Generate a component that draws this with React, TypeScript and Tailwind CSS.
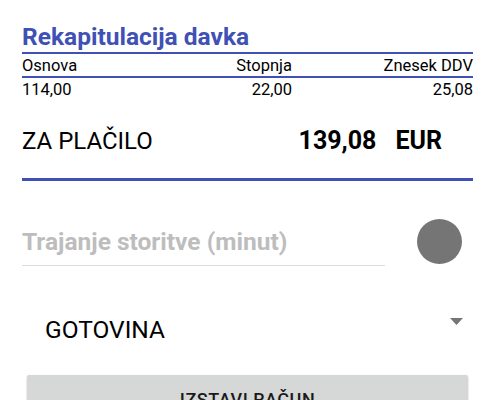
export default function App() {
  return (
    <main className="h-[400px] w-[495px] overflow-hidden bg-white px-[22px] pt-[23px] font-['Roboto',sans-serif] text-black">
      <h1 className="text-[24.5px] font-bold leading-[28px] text-[#3f51b5]">
        Rekapitulacija davka
      </h1>
      <div className="mt-px h-[2px] bg-[#3f51b5]" />

      <div className="mt-[2px] grid grid-cols-[150px_120px_1fr] text-[16.5px] leading-[20px]">
        <span>Osnova</span>
        <span className="text-right">Stopnja</span>
        <span className="text-right">Znesek DDV</span>
      </div>
      <div className="h-[2px] bg-[#3f51b5]" />
      <div className="mt-[2px] grid grid-cols-[150px_120px_1fr] text-[16.5px] leading-[20px]">
        <span>114,00</span>
        <span className="text-right">22,00</span>
        <span className="text-right">25,08</span>
      </div>

      <div className="mt-[26px] flex h-[30px] items-baseline leading-[30px]">
        <span className="flex-1 text-[24px]">ZA PLAČILO</span>
        <span className="text-[25px] font-bold">139,08</span>
        <span className="ml-[19px] mr-[31px] text-[25px] font-bold">EUR</span>
      </div>
      <div className="mt-[22px] h-[3px] bg-[#3f51b5]" />

      <div className="mt-[38px] flex items-start">
        <div className="w-[363px] pt-[8px]">
          <div className="text-[24.5px] font-bold leading-[30px] text-[#bdbdbd]">
            Trajanje storitve (minut)
          </div>
          <div className="mt-[8px] h-px bg-[#dcdcdc]" />
        </div>
        <div className="ml-[32px] h-[45px] w-[45px] shrink-0 rounded-full bg-[#757575]" />
      </div>

      <div className="mt-[49px] flex items-start">
        <span className="flex-1 pl-[23px] text-[24.5px] leading-[30px]">GOTOVINA</span>
        <svg className="mr-[10px] mt-[3px]" width="13" height="7" viewBox="0 0 13 7">
          <path d="M0 0H13L6.5 7Z" fill="#757575" />
        </svg>
      </div>

      <div className="px-[5px] pt-[30px]">
        <button className="block h-[48px] w-full rounded-[2px] bg-[#d6d7d7] text-[18px] font-medium tracking-[0.5px] text-[#1a1a1a] shadow-[0_1px_2px_rgba(0,0,0,0.25)]">
          IZSTAVI RAČUN
        </button>
      </div>
    </main>
  );
}
